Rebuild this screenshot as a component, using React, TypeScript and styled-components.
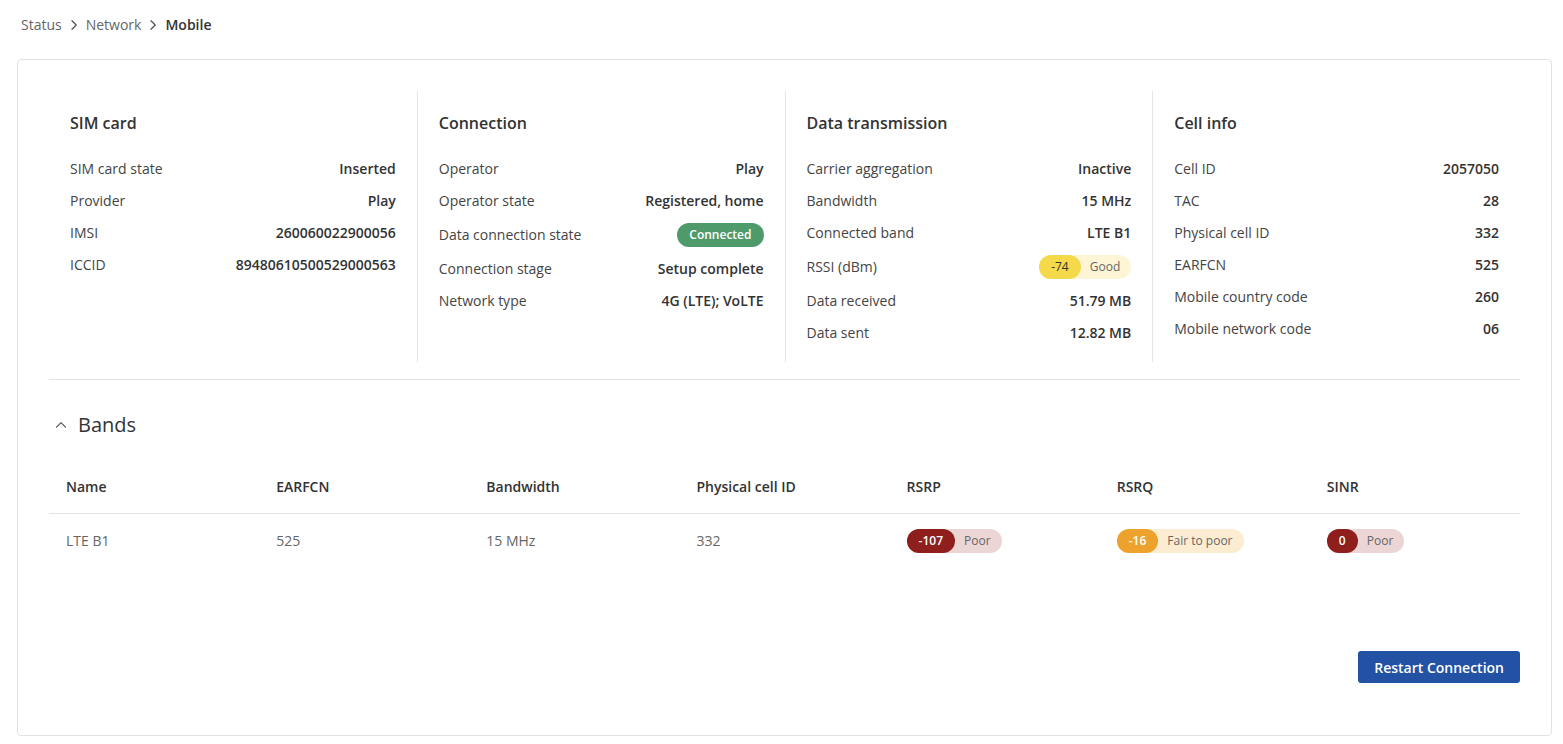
import React, { FC } from "react";
import styled, { createGlobalStyle } from "styled-components";

const GlobalStyle = createGlobalStyle`
  html, body {
    margin: 0;
    padding: 0;
    background: #ffffff;
    font-family: "Open Sans", "Noto Sans", "Liberation Sans", sans-serif;
    color: #333;
  }
  * { box-sizing: border-box; }
`;

type Tone = "green" | "yellow" | "red" | "orange";

interface InfoRow {
  label: string;
  value: string;
  badge?: "connected" | { value: string; text: string; tone: Tone };
}

interface InfoGroup {
  title: string;
  rows: InfoRow[];
}

const groups: InfoGroup[] = [
  {
    title: "SIM card",
    rows: [
      { label: "SIM card state", value: "Inserted" },
      { label: "Provider", value: "Play" },
      { label: "IMSI", value: "260060022900056" },
      { label: "ICCID", value: "89480610500529000563" },
    ],
  },
  {
    title: "Connection",
    rows: [
      { label: "Operator", value: "Play" },
      { label: "Operator state", value: "Registered, home" },
      { label: "Data connection state", value: "", badge: "connected" },
      { label: "Connection stage", value: "Setup complete" },
      { label: "Network type", value: "4G (LTE); VoLTE" },
    ],
  },
  {
    title: "Data transmission",
    rows: [
      { label: "Carrier aggregation", value: "Inactive" },
      { label: "Bandwidth", value: "15 MHz" },
      { label: "Connected band", value: "LTE B1" },
      { label: "RSSI (dBm)", value: "", badge: { value: "-74", text: "Good", tone: "yellow" } },
      { label: "Data received", value: "51.79 MB" },
      { label: "Data sent", value: "12.82 MB" },
    ],
  },
  {
    title: "Cell info",
    rows: [
      { label: "Cell ID", value: "2057050" },
      { label: "TAC", value: "28" },
      { label: "Physical cell ID", value: "332" },
      { label: "EARFCN", value: "525" },
      { label: "Mobile country code", value: "260" },
      { label: "Mobile network code", value: "06" },
    ],
  },
];

const toneColors: Record<Tone, { strong: string; soft: string; text: string }> = {
  green: { strong: "#4f9a6b", soft: "#dcefe3", text: "#fff" },
  yellow: { strong: "#f4d94b", soft: "#fdf5d6", text: "#333" },
  red: { strong: "#8e1f1c", soft: "#ecd5d5", text: "#fff" },
  orange: { strong: "#eca22d", soft: "#fcedd2", text: "#fff" },
};

const bandColumns = ["Name", "EARFCN", "Bandwidth", "Physical cell ID", "RSRP", "RSRQ", "SINR"];

const Signal: FC<{ value: string; text: string; tone: Tone }> = ({ value, text, tone }) => (
  <StSignal $tone={tone}>
    <span className="value">{value}</span>
    <span className="text">{text}</span>
  </StSignal>
);

const ChevronUp: FC = () => (
  <svg width="12" height="12" viewBox="0 0 12 12" fill="none">
    <path d="M1.5 8.2 L6 3.7 L10.5 8.2" stroke="#555" strokeWidth="1.2" strokeLinecap="round" strokeLinejoin="round" />
  </svg>
);

const Separator: FC = () => (
  <svg width="14" height="14" viewBox="0 0 14 14" fill="none">
    <path d="M5 2.8 L9.2 7 L5 11.2" stroke="#555" strokeWidth="1.3" strokeLinecap="round" strokeLinejoin="round" />
  </svg>
);

const App: FC = () => {
  return (
    <>
      <GlobalStyle />
      <StPage>
        <StCrumbs>
          <span>Status</span>
          <Separator />
          <span>Network</span>
          <Separator />
          <span className="current">Mobile</span>
        </StCrumbs>

        <StCard>
          <StGroups>
            {groups.map((group) => (
              <StGroup key={group.title}>
                <StGroupTitle>{group.title}</StGroupTitle>
                {group.rows.map((row) => (
                  <StRow key={row.label} $tall={!!row.badge}>
                    <span className="label">{row.label}</span>
                    {row.badge === "connected" ? (
                      <StStatus>Connected</StStatus>
                    ) : row.badge ? (
                      <Signal {...row.badge} />
                    ) : (
                      <span className="value">{row.value}</span>
                    )}
                  </StRow>
                ))}
              </StGroup>
            ))}
          </StGroups>

          <StSection>
            <StSectionTitle>
              <ChevronUp />
              Bands
            </StSectionTitle>

            <StTable>
              <thead>
                <tr>
                  {bandColumns.map((c) => (
                    <th key={c}>{c}</th>
                  ))}
                </tr>
              </thead>
              <tbody>
                <tr>
                  <td>LTE B1</td>
                  <td>525</td>
                  <td>15 MHz</td>
                  <td>332</td>
                  <td>
                    <Signal value="-107" text="Poor" tone="red" />
                  </td>
                  <td>
                    <Signal value="-16" text="Fair to poor" tone="orange" />
                  </td>
                  <td>
                    <Signal value="0" text="Poor" tone="red" />
                  </td>
                </tr>
              </tbody>
            </StTable>
          </StSection>

          <StActions>
            <StButton type="button">Restart Connection</StButton>
          </StActions>
        </StCard>
      </StPage>
    </>
  );
};

export default App;

const StPage = styled.div`
  padding: 15px 11px 8px 17px;
`;

const StCrumbs = styled.nav`
  display: flex;
  align-items: center;
  gap: 6px;
  padding-left: 4px;
  height: 20px;
  font-size: 14px;
  line-height: 20px;
  color: #666;
  margin-bottom: 24px;

  svg {
    margin: 0 -1px;
  }

  .current {
    color: #333;
    font-weight: 600;
  }
`;

const StCard = styled.div`
  border: 1px solid #e2e2e2;
  border-radius: 4px;
  padding: 31px 31px 52px 31px;
`;

const StGroups = styled.div`
  display: grid;
  grid-template-columns: repeat(4, 1fr);
  padding-bottom: 17px;
  border-bottom: 1px solid #e3e3e3;
`;

const StGroup = styled.div`
  padding: 21px 21px 13px 21px;

  & + & {
    border-left: 1px solid #e6e6e6;
  }
`;

const StGroupTitle = styled.div`
  font-size: 16px;
  line-height: 22px;
  font-weight: 600;
  color: #333;
  margin-bottom: 19px;
`;

const StRow = styled.div<{ $tall: boolean }>`
  display: flex;
  align-items: center;
  justify-content: space-between;
  padding: 6px 0;
  min-height: ${(p) => (p.$tall ? "36px" : "32px")};
  font-size: 14px;
  line-height: 20px;

  .label {
    color: #444;
  }

  .value {
    color: #333;
    font-weight: 600;
  }
`;

const StStatus = styled.span`
  display: inline-flex;
  align-items: center;
  height: 24px;
  padding: 0 12px;
  border-radius: 12px;
  background: ${toneColors.green.strong};
  color: #fff;
  font-size: 12px;
  font-weight: 600;
`;

const StSignal = styled.span<{ $tone: Tone }>`
  display: inline-flex;
  align-items: center;
  height: 24px;
  border-radius: 12px;
  background: ${(p) => toneColors[p.$tone].soft};
  font-size: 12px;
  line-height: 24px;

  .value {
    height: 24px;
    padding: 0 12px;
    border-radius: 12px;
    background: ${(p) => toneColors[p.$tone].strong};
    color: ${(p) => toneColors[p.$tone].text};
    font-weight: ${(p) => (p.$tone === "yellow" ? 400 : 600)};
  }

  .text {
    padding: 0 11px 0 9px;
    color: #666;
  }
`;

const StSection = styled.div`
  padding-top: 31px;
`;

const StSectionTitle = styled.div`
  display: flex;
  align-items: center;
  gap: 11px;
  padding-left: 6px;
  font-size: 20px;
  line-height: 28px;
  color: #333;
  margin-bottom: 22px;
`;

const StTable = styled.table`
  width: 100%;
  border-collapse: collapse;
  table-layout: fixed;
  font-size: 14px;
  line-height: 20px;

  th {
    text-align: left;
    font-weight: 600;
    color: #333;
    padding: 16px 17px;
    border-bottom: 1px solid #e3e3e3;
  }

  td {
    padding: 15px 17px;
    color: #666;
    height: 54px;
  }
`;

const StActions = styled.div`
  display: flex;
  justify-content: flex-end;
  margin-top: 83px;
`;

const StButton = styled.button`
  height: 32px;
  padding: 0 16px;
  border: none;
  border-radius: 3px;
  background: #2351a3;
  color: #fff;
  font-family: inherit;
  font-size: 14px;
  font-weight: 600;
  cursor: pointer;
`;
